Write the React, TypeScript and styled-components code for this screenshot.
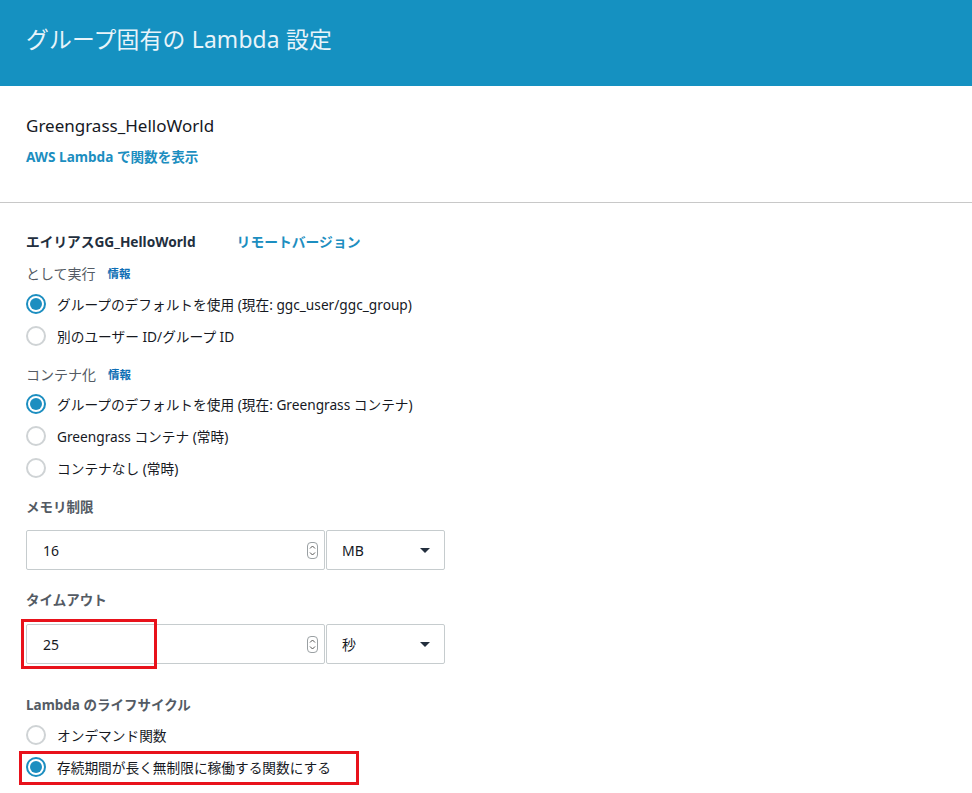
import React from "react";
import styled, { createGlobalStyle } from "styled-components";

const Global = createGlobalStyle`
  html, body { margin: 0; padding: 0; background: #ffffff; }
  body {
    font-family: "Noto Sans", "Noto Sans CJK JP", sans-serif;
    color: #16191f;
  }
  * { box-sizing: border-box; }
`;

const Page = styled.div`
  width: 972px;
  min-height: 793px;
  background: #fff;
  overflow: hidden;
`;

const Header = styled.header`
  height: 86px;
  background: #1591c1;
  padding: 25px 0 0 26px;
`;

const Title = styled.h1`
  margin: 0;
  font-size: 22.8px;
  line-height: 30px;
  font-weight: 400;
  color: #e8f4fa;
  letter-spacing: 0.2px;
`;

const Section = styled.section<{ $pt: number; $pb?: number }>`
  padding: ${(p) => p.$pt}px 26px ${(p) => p.$pb ?? 0}px 26px;
`;

const FnName = styled.div`
  font-size: 17px;
  line-height: 24px;
  color: #16191f;
`;

const Link = styled.a<{ $mt?: number }>`
  display: inline-block;
  margin-top: ${(p) => p.$mt ?? 0}px;
  font-size: 13.6px;
  line-height: 20px;
  font-weight: 700;
  color: #1c8ec0;
  text-decoration: none;
`;

const Divider = styled.hr`
  margin: 0;
  border: none;
  border-top: 1px solid #c8c8c8;
`;

const AliasRow = styled.div`
  display: flex;
  align-items: center;
  gap: 41px;
  height: 20px;
`;

const AliasText = styled.span`
  font-size: 13.7px;
  line-height: 20px;
  font-weight: 700;
  color: #232f3e;
`;

const RemoteLink = styled.span`
  font-size: 13.8px;
  line-height: 20px;
  font-weight: 600;
  color: #1c8ec0;
`;

const FieldLabel = styled.div<{ $mt: number; $bold?: boolean; $mb?: number }>`
  display: flex;
  align-items: center;
  gap: 12px;
  margin-top: ${(p) => p.$mt}px;
  margin-bottom: ${(p) => p.$mb ?? 4}px;
  font-size: ${(p) => (p.$bold ? 13.5 : 14)}px;
  line-height: 20px;
  font-weight: ${(p) => (p.$bold ? 700 : 400)};
  color: #545b64;
`;

const Info = styled.span`
  font-size: 11.5px;
  font-weight: 700;
  color: #0f6fb5;
`;

const RadioRow = styled.label`
  position: relative;
  display: flex;
  align-items: center;
  gap: 11px;
  height: 32px;
  font-size: 13.7px;
  color: #16191f;
`;

const RadioCircle = styled.span<{ $checked?: boolean }>`
  width: 20px;
  height: 20px;
  flex: none;
  border-radius: 50%;
  border: 2px solid ${(p) => (p.$checked ? "#1c8ec0" : "#cfd3d5")};
  display: flex;
  align-items: center;
  justify-content: center;
  background: #fff;
  &::after {
    content: "";
    width: 12px;
    height: 12px;
    border-radius: 50%;
    background: ${(p) => (p.$checked ? "#1c8ec0" : "transparent")};
  }
`;

const InputRow = styled.div`
  position: relative;
  display: flex;
  gap: 1px;
  width: 420px;
`;

const NumberBox = styled.div`
  width: 299px;
  height: 40px;
  border: 1px solid #c6ccce;
  border-radius: 2px;
  display: flex;
  align-items: center;
  padding: 0 6px 0 16px;
  font-size: 14px;
  color: #16191f;
`;

const NumberValue = styled.span`
  flex: 1;
`;

const Spinner = styled.span`
  width: 11px;
  height: 17px;
  border: 1px solid #9aa0a3;
  border-radius: 4px;
  display: flex;
  align-items: center;
  justify-content: center;
`;

const SelectBox = styled.div`
  width: 119px;
  height: 40px;
  border: 1px solid #c6ccce;
  border-radius: 2px;
  display: flex;
  align-items: center;
  justify-content: space-between;
  padding: 0 14px 0 15px;
  font-size: 14px;
  color: #16191f;
`;

const Caret = styled.span`
  width: 0;
  height: 0;
  border-left: 5px solid transparent;
  border-right: 5px solid transparent;
  border-top: 5px solid #232f3e;
`;

const Highlight = styled.span<{ $l: number; $t: number; $w: number; $h: number }>`
  position: absolute;
  left: ${(p) => p.$l}px;
  top: ${(p) => p.$t}px;
  width: ${(p) => p.$w}px;
  height: ${(p) => p.$h}px;
  border: 3px solid #e8121b;
  pointer-events: none;
`;

const Radio = ({ checked, children }: { checked?: boolean; children: React.ReactNode }) => (
  <RadioRow>
    <RadioCircle $checked={checked} />
    <span>{children}</span>
  </RadioRow>
);

const SpinIcon = () => (
  <Spinner>
    <svg width="7" height="13" viewBox="0 0 7 13">
      <path d="M1 4.5 L3.5 2 L6 4.5" fill="none" stroke="#555" strokeWidth="1" />
      <path d="M1 8.5 L3.5 11 L6 8.5" fill="none" stroke="#555" strokeWidth="1" />
    </svg>
  </Spinner>
);

export default function App() {
  return (
    <Page>
      <Global />
      <Header>
        <Title>グループ固有の Lambda 設定</Title>
      </Header>
      <Section $pt={28} $pb={35}>
        <FnName>Greengrass_HelloWorld</FnName>
        <Link $mt={9}>AWS Lambda で関数を表示</Link>
      </Section>
      <Divider />
      <Section $pt={29}>
        <AliasRow>
          <AliasText>エイリアスGG_HelloWorld</AliasText>
          <RemoteLink>リモートバージョン</RemoteLink>
        </AliasRow>

        <FieldLabel $mt={12}>
          として実行<Info>情報</Info>
        </FieldLabel>
        <Radio checked>グループのデフォルトを使用 (現在: ggc_user/ggc_group)</Radio>
        <Radio>別のユーザー ID/グループ ID</Radio>

        <FieldLabel $mt={13} $mb={3}>
          コンテナ化<Info>情報</Info>
        </FieldLabel>
        <Radio checked>グループのデフォルトを使用 (現在: Greengrass コンテナ)</Radio>
        <Radio>Greengrass コンテナ (常時)</Radio>
        <Radio>コンテナなし (常時)</Radio>

        <FieldLabel $mt={13} $mb={13} $bold>
          メモリ制限
        </FieldLabel>
        <InputRow>
          <NumberBox>
            <NumberValue>16</NumberValue>
            <SpinIcon />
          </NumberBox>
          <SelectBox>
            MB
            <Caret />
          </SelectBox>
        </InputRow>

        <FieldLabel $mt={20} $mb={14} $bold>
          タイムアウト
        </FieldLabel>
        <InputRow>
          <NumberBox>
            <NumberValue>25</NumberValue>
            <SpinIcon />
          </NumberBox>
          <SelectBox>
            秒
            <Caret />
          </SelectBox>
          <Highlight $l={-5} $t={-5} $w={136} $h={50} />
        </InputRow>

        <FieldLabel $mt={31} $bold>
          Lambda のライフサイクル
        </FieldLabel>
        <Radio>オンデマンド関数</Radio>
        <RadioRow>
          <RadioCircle $checked />
          <span>存続期間が長く無制限に稼働する関数にする</span>
          <Highlight $l={-7} $t={0} $w={340} $h={34} />
        </RadioRow>
      </Section>
    </Page>
  );
}
